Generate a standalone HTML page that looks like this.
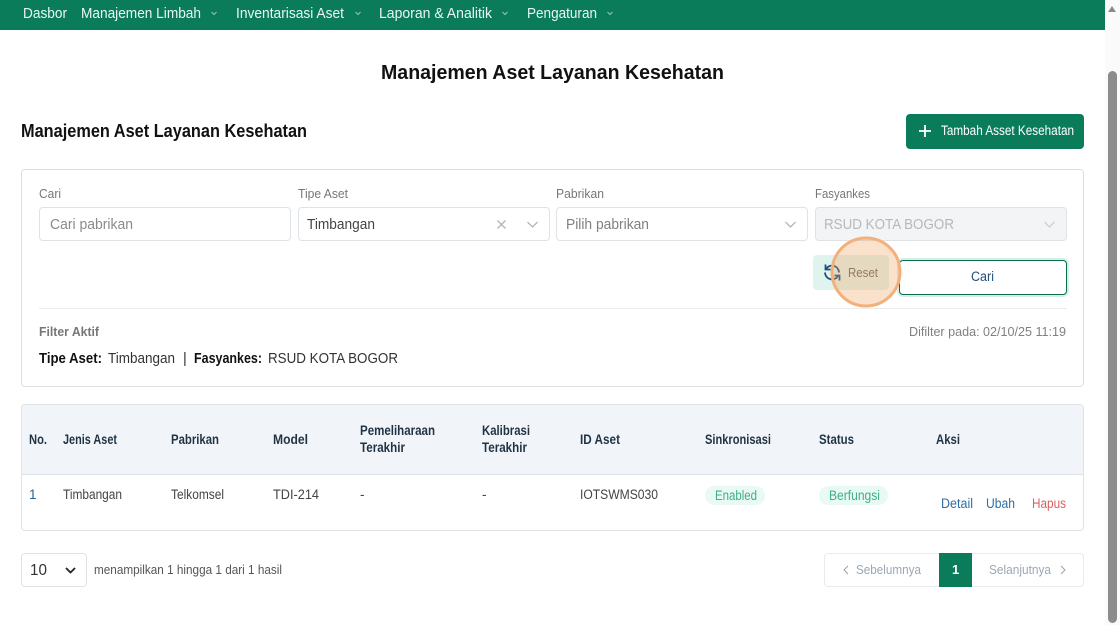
<!DOCTYPE html>
<html lang="id"><head><meta charset="utf-8"><title>Manajemen Aset Layanan Kesehatan</title>
<style>
html,body{margin:0;padding:0;width:1120px;height:625px;overflow:hidden;background:#fff}
.b{position:absolute;box-sizing:border-box}
svg{position:absolute;left:0;top:0}
text{font-family:"Liberation Sans",Arial,sans-serif;fill:#333}
.inp{border:1px solid #dfe3e8;border-radius:4px;background:#fff;height:34px;top:207px;width:252px}
</style></head><body>
<div class="b" style="left:0;top:0;width:1105px;height:30px;background:#0a7c5a"></div>
<div class="b" style="left:1105px;top:0;width:15px;height:625px;background:#fafafa"></div>
<div class="b" style="left:1108px;top:71px;width:9px;height:552px;background:#8c8c8c;border-radius:5px"></div>
<div class="b" style="left:906px;top:114px;width:178px;height:35px;background:#0a7c5a;border-radius:4px"></div>
<div class="b" style="left:21px;top:169px;width:1063px;height:218px;border:1px solid #dcdfe3;border-radius:4px"></div>
<div class="b inp" style="left:39px"></div>
<div class="b inp" style="left:298px"></div>
<div class="b inp" style="left:556px"></div>
<div class="b inp" style="left:815px;background:#f3f4f6"></div>
<div class="b" style="left:813px;top:255px;width:76px;height:35px;background:#e0f4ef;border-radius:4px"></div>
<div class="b" style="left:899px;top:260px;width:168px;height:35px;background:#fff;border:1.5px solid #0f6b50;border-radius:4px;box-shadow:0 0 0 2px #d3efe6"></div>
<div class="b" style="left:39px;top:308px;width:1028px;height:1px;background:#ececec"></div>
<div class="b" style="left:21px;top:404px;width:1063px;height:127px;border:1px solid #dfe3e8;border-radius:4px;overflow:hidden">
  <div style="height:69px;background:#f1f5f9;border-bottom:1px solid #dde2e8"></div>
</div>
<div class="b" style="left:705px;top:486px;width:60px;height:19px;background:#e9f9f3;border-radius:10px"></div>
<div class="b" style="left:819px;top:486px;width:69px;height:19px;background:#e9f9f3;border-radius:10px"></div>
<div class="b" style="left:21px;top:553px;width:66px;height:34px;border:1px solid #dfe3e8;border-radius:4px"></div>
<div class="b" style="left:824px;top:553px;width:260px;height:34px;border:1px solid #e8ebef;border-radius:4px"></div>
<div class="b" style="left:939px;top:553px;width:33px;height:34px;background:#0a7c5a"></div>

<svg width="1120" height="625" viewBox="0 0 1120 625" xmlns="http://www.w3.org/2000/svg">
<g font-size="14.500">
<text x="23" y="18" textLength="44" lengthAdjust="spacingAndGlyphs" style="fill:#eaf6f1">Dasbor</text>
<text x="81" y="18" textLength="120" lengthAdjust="spacingAndGlyphs" style="fill:#eaf6f1">Manajemen Limbah</text>
<text x="236" y="18" textLength="108" lengthAdjust="spacingAndGlyphs" style="fill:#eaf6f1">Inventarisasi Aset</text>
<text x="379" y="18" textLength="113" lengthAdjust="spacingAndGlyphs" style="fill:#eaf6f1">Laporan &amp; Analitik</text>
<text x="527" y="18" textLength="70" lengthAdjust="spacingAndGlyphs" style="fill:#eaf6f1">Pengaturan</text>
</g>
<g fill="none" stroke="#8cc7b2" stroke-width="1.100">
<path d="M211.500 12l2.500 2.500 2.500-2.500M355.500 12l2.500 2.500 2.500-2.500M502.500 12l2.500 2.500 2.500-2.500M607.500 12l2.500 2.500 2.500-2.500"/>
</g>
<path d="M1108 12l4-6 4 6z" fill="#8c8c8c"/>

<text x="381" y="79" font-size="20.500" font-weight="700" textLength="343" lengthAdjust="spacingAndGlyphs" style="fill:#111">Manajemen Aset Layanan Kesehatan</text>
<text x="21" y="137" font-size="18" font-weight="700" textLength="286" lengthAdjust="spacingAndGlyphs" style="fill:#111">Manajemen Aset Layanan Kesehatan</text>

<path d="M925 125v12M919 131h12" stroke="#fff" stroke-width="1.800" fill="none"/>
<text x="941" y="135" font-size="13.500" textLength="133" lengthAdjust="spacingAndGlyphs" style="fill:#fff">Tambah Asset Kesehatan</text>

<g font-size="13">
<text x="39" y="198" textLength="22" lengthAdjust="spacingAndGlyphs" style="fill:#777">Cari</text>
<text x="298" y="198" textLength="50" lengthAdjust="spacingAndGlyphs" style="fill:#777">Tipe Aset</text>
<text x="556" y="198" textLength="48" lengthAdjust="spacingAndGlyphs" style="fill:#777">Pabrikan</text>
<text x="815" y="198" textLength="55" lengthAdjust="spacingAndGlyphs" style="fill:#777">Fasyankes</text>
</g>
<g font-size="14.500">
<text x="50" y="229" textLength="83" lengthAdjust="spacingAndGlyphs" style="fill:#8a8a8a">Cari pabrikan</text>
<text x="307" y="229" textLength="68" lengthAdjust="spacingAndGlyphs" style="fill:#444">Timbangan</text>
<text x="566" y="229" textLength="83" lengthAdjust="spacingAndGlyphs" style="fill:#808080">Pilih pabrikan</text>
<text x="824" y="229" textLength="130" lengthAdjust="spacingAndGlyphs" style="fill:#b8b8b8">RSUD KOTA BOGOR</text>
</g>
<g fill="none" stroke="#b5b5b5" stroke-width="1.300">
<path d="M497.500 220.500l8 8M505.500 220.500l-8 8"/>
<path d="M527.500 222l5 5 5-5M785.500 222l5 5 5-5"/>
<path d="M1044.500 222l5 5 5-5" stroke="#d0d0d0"/>
</g>

<text x="848" y="277" font-size="13" textLength="30" lengthAdjust="spacingAndGlyphs" style="fill:#666">Reset</text>
<g fill="none" stroke="#1f4f78" stroke-width="1.800">
<path d="M826 269A7 7 0 0 1 839 272.500"/>
<path d="M825.500 264.500v5h5"/>
<path d="M825 272.500A7 7 0 0 0 838 276"/>
<path d="M839.500 280.500v-5h-5"/>
</g>
<circle cx="866" cy="272" r="34" fill="#f0a25e" fill-opacity=".32" stroke="#f3b07a" stroke-width="3"/>
<text x="971" y="281" font-size="13.500" textLength="23" lengthAdjust="spacingAndGlyphs" style="fill:#1e4e79">Cari</text>

<text x="39" y="336" font-size="12.500" font-weight="700" textLength="60" lengthAdjust="spacingAndGlyphs" style="fill:#777">Filter Aktif</text>
<text x="909" y="336" font-size="13" textLength="157" lengthAdjust="spacingAndGlyphs" style="fill:#808080">Difilter pada: 02/10/25 11:19</text>
<g font-size="14.500">
<text x="39" y="363" font-weight="700" textLength="63" lengthAdjust="spacingAndGlyphs" style="fill:#111">Tipe Aset:</text>
<text x="108" y="363" textLength="67" lengthAdjust="spacingAndGlyphs">Timbangan</text>
<text x="183" y="363" style="fill:#333">|</text>
<text x="194" y="363" font-weight="700" textLength="68" lengthAdjust="spacingAndGlyphs" style="fill:#111">Fasyankes:</text>
<text x="268" y="363" textLength="130" lengthAdjust="spacingAndGlyphs">RSUD KOTA BOGOR</text>
</g>

<g font-size="13.500" font-weight="700">
<text x="29" y="444" textLength="18" lengthAdjust="spacingAndGlyphs" style="fill:#1f3344">No.</text>
<text x="63" y="444" textLength="54" lengthAdjust="spacingAndGlyphs" style="fill:#1f3344">Jenis Aset</text>
<text x="171" y="444" textLength="48" lengthAdjust="spacingAndGlyphs" style="fill:#1f3344">Pabrikan</text>
<text x="273" y="444" textLength="35" lengthAdjust="spacingAndGlyphs" style="fill:#1f3344">Model</text>
<text x="360" y="435" textLength="75" lengthAdjust="spacingAndGlyphs" style="fill:#1f3344">Pemeliharaan</text>
<text x="360" y="452" textLength="45" lengthAdjust="spacingAndGlyphs" style="fill:#1f3344">Terakhir</text>
<text x="482" y="435" textLength="48" lengthAdjust="spacingAndGlyphs" style="fill:#1f3344">Kalibrasi</text>
<text x="482" y="452" textLength="45" lengthAdjust="spacingAndGlyphs" style="fill:#1f3344">Terakhir</text>
<text x="580" y="444" textLength="40" lengthAdjust="spacingAndGlyphs" style="fill:#1f3344">ID Aset</text>
<text x="705" y="444" textLength="66" lengthAdjust="spacingAndGlyphs" style="fill:#1f3344">Sinkronisasi</text>
<text x="819" y="444" textLength="35" lengthAdjust="spacingAndGlyphs" style="fill:#1f3344">Status</text>
<text x="936" y="444" textLength="24" lengthAdjust="spacingAndGlyphs" style="fill:#1f3344">Aksi</text>
</g>
<g font-size="13.500">
<text x="29" y="499" style="fill:#2a6496">1</text>
<text x="63" y="499" textLength="59" lengthAdjust="spacingAndGlyphs" style="fill:#444">Timbangan</text>
<text x="171" y="499" textLength="53" lengthAdjust="spacingAndGlyphs" style="fill:#444">Telkomsel</text>
<text x="273" y="499" textLength="46" lengthAdjust="spacingAndGlyphs" style="fill:#444">TDI-214</text>
<text x="360" y="499" style="fill:#444">-</text>
<text x="482" y="499" style="fill:#444">-</text>
<text x="580" y="499" textLength="78" lengthAdjust="spacingAndGlyphs" style="fill:#444">IOTSWMS030</text>
<text x="715" y="500" textLength="42" lengthAdjust="spacingAndGlyphs" style="fill:#3fae8a">Enabled</text>
<text x="829" y="500" textLength="51" lengthAdjust="spacingAndGlyphs" style="fill:#3fae8a">Berfungsi</text>
<text x="941" y="508" textLength="32" lengthAdjust="spacingAndGlyphs" style="fill:#2f6ea5">Detail</text>
<text x="986" y="508" textLength="29" lengthAdjust="spacingAndGlyphs" style="fill:#2f6ea5">Ubah</text>
<text x="1032" y="508" textLength="34" lengthAdjust="spacingAndGlyphs" style="fill:#d9605f">Hapus</text>
</g>

<text x="30" y="575" font-size="15.500" textLength="17" lengthAdjust="spacingAndGlyphs">10</text>
<path d="M66 568l4.500 4.500 4.500-4.500" fill="none" stroke="#222" stroke-width="1.800"/>
<text x="94" y="574" font-size="13" textLength="188" lengthAdjust="spacingAndGlyphs" style="fill:#555">menampilkan 1 hingga 1 dari 1 hasil</text>
<g font-size="13">
<text x="856" y="574" textLength="65" lengthAdjust="spacingAndGlyphs" style="fill:#9aa8b5">Sebelumnya</text>
<text x="989" y="574" textLength="62" lengthAdjust="spacingAndGlyphs" style="fill:#9aa8b5">Selanjutnya</text>
<text x="952" y="574" font-weight="700" style="fill:#fff">1</text>
</g>
<path d="M848 566l-4 4 4 4M1061 566l4 4-4 4" fill="none" stroke="#9aa8b5" stroke-width="1.100"/>
</svg>
</body></html>
